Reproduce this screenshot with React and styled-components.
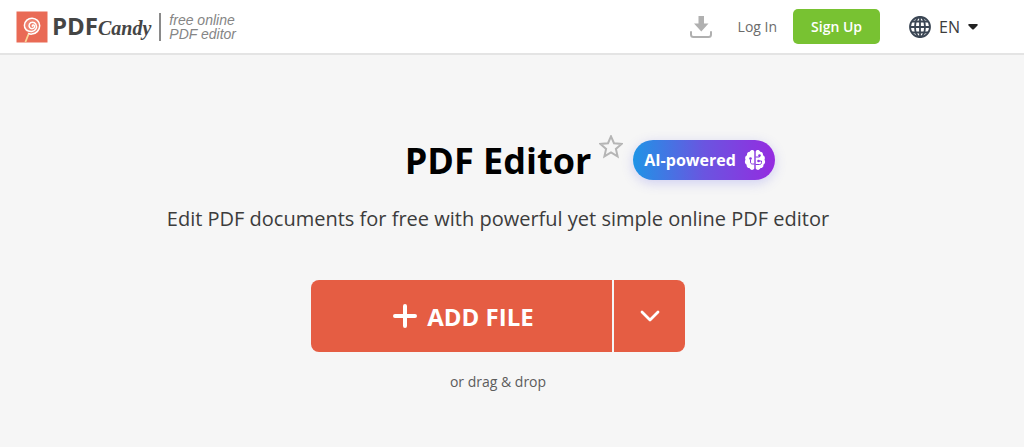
import React from "react"
import styled, { createGlobalStyle } from "styled-components"

const GlobalStyle = createGlobalStyle`
  * {
    box-sizing: border-box;
  }
  body {
    margin: 0;
    background: #f6f6f6;
    font-family: "Open Sans", "Noto Sans", sans-serif;
    color: #3c3c3c;
  }
  svg {
    display: block;
    flex: none;
  }
  button {
    font-family: inherit;
    border: 0;
    padding: 0;
    cursor: pointer;
  }
`

const Header = styled.header`
  display: flex;
  align-items: center;
  justify-content: space-between;
  height: 55px;
  padding: 0 46px 0 16px;
  background: #fff;
  border-bottom: 2px solid #e4e4e4;
`

const Brand = styled.a`
  display: flex;
  align-items: center;
  color: #454545;
  text-decoration: none;
`

const BrandName = styled.span`
  margin-left: 4px;
  font-size: 24px;
  font-weight: 700;
  line-height: 32px;
`

const BrandScript = styled.span`
  font-family: "Liberation Serif", serif;
  font-style: italic;
  font-weight: 700;
  font-size: 20px;
`

const Slogan = styled.span`
  margin-left: 8px;
  padding-left: 8px;
  border-left: 2px solid #8a8a8a;
  font-family: "Liberation Sans", Arial, sans-serif;
  font-style: italic;
  font-size: 14px;
  line-height: 14px;
  color: #858585;
`

const Nav = styled.nav`
  display: flex;
  align-items: center;
`

const IconButton = styled.button`
  background: none;
`

const LogIn = styled.a`
  margin: 0 16px 0 25px;
  font-size: 14px;
  color: #6b6b6b;
  text-decoration: none;
`

const SignUp = styled.button`
  height: 35px;
  padding: 0 18px;
  border-radius: 5px;
  background: #78c232;
  color: #fff;
  font-size: 14px;
  font-weight: 600;
`

const Language = styled.button`
  display: flex;
  align-items: center;
  margin-left: 29px;
  background: none;
  color: #3c3c3c;
  font-size: 16px;
  gap: 8px;
`

const Main = styled.main`
  display: flex;
  flex-direction: column;
  align-items: center;
  padding: 80px 28px 48px 0;
`

const TitleRow = styled.div`
  position: relative;
  display: flex;
`

const Title = styled.h1`
  margin: 0;
  font-size: 36px;
  font-weight: 700;
  line-height: 52px;
  color: #000;
`

/* hangs off the right end of the title so the title stays centred */
const TitleExtras = styled.div`
  position: absolute;
  left: 100%;
  top: 0;
  display: flex;
  align-items: flex-start;
  gap: 10px;
  padding-left: 8px;
`

const Badge = styled.span`
  display: flex;
  align-items: center;
  gap: 8px;
  height: 40px;
  margin-top: 5px;
  padding: 0 9px 0 11px;
  border-radius: 20px;
  background: linear-gradient(90deg, #1f94e6, #6a55e0 50%, #952be0);
  box-shadow: 0 3px 12px rgba(90, 90, 230, 0.25);
  color: #fff;
  font-size: 16px;
  font-weight: 700;
  white-space: nowrap;
`

const Subtitle = styled.p`
  margin: 16px 0 0;
  font-size: 20px;
  line-height: 32px;
`

const Upload = styled.div`
  display: flex;
  gap: 2px;
  width: 374px;
  max-width: 100%;
  height: 72px;
  margin-top: 45px;
  border-radius: 8px;
  overflow: hidden;
`

const UploadButton = styled.button`
  display: flex;
  align-items: center;
  justify-content: center;
  gap: 10px;
  flex: ${props => (props.$narrow ? "0 0 71px" : "1")};
  padding-left: ${props => (props.$narrow ? "0" : "4px")};
  background: #e55d43;
  color: #fff;
  font-size: 24px;
  font-weight: 700;
`

const Hint = styled.p`
  margin: 20px 0 0;
  font-size: 14px;
  line-height: 20px;
  color: #5c5c5c;
`

const Lollipop = () => (
  <svg width="32" height="32" viewBox="0 0 32 32" aria-hidden="true">
    <rect width="31" height="31" y="0.5" x="0.5" fill="#e96a55" />
    <path d="M12.8 22.5 9.4 31" stroke="#f9d596" strokeWidth="1.8" />
    <circle cx="16" cy="15" r="8" fill="#ee8371" />
    <path
      d="M16.400 15.200c-.5-1 .6-1.700 1.500-1 1.300 1 .5 3.200-1.400 3.400-2.700.3-4.100-2.300-3.100-4.400 1.300-2.500 4.900-2.500 6.400 0 1.800 3.300-.3 6.900-3.800 7.200-4.800.4-7.800-2.500-7.600-6.200.3-4.200 3.700-7.100 7.800-7 4 .1 7.300 3.300 7.500 7.300.1 4.500-3.400 8.300-7.900 8.600-1.200.1-2.200-.1-3-.5"
      fill="none"
      stroke="#fff"
      strokeWidth="1.500"
      strokeLinecap="round"
    />
  </svg>
)

const DownloadIcon = () => (
  <svg width="24" height="24" viewBox="0 0 24 24" aria-hidden="true">
    <path d="M9.500 1h5.500v7.500h4.500l-7.200 8-7.300-8h4.500z" fill="#b0b0b0" />
    <path
      d="M2 17v2.500c0 1.700.8 2.500 2.500 2.500h15c1.700 0 2.500-.8 2.500-2.500V17"
      fill="none"
      stroke="#b0b0b0"
      strokeWidth="2"
      strokeLinecap="round"
    />
  </svg>
)

const GlobeIcon = () => (
  <svg width="22" height="22" viewBox="0 0 22 22" aria-hidden="true">
    <g fill="none" stroke="#3b4654" strokeWidth="1.8">
      <circle cx="11" cy="11" r="10" />
      <ellipse cx="11" cy="11" rx="5" ry="10" />
      <path d="M11 1v20M1 11h20M3 5.500h16M3 16.500h16" />
    </g>
  </svg>
)

const StarIcon = () => (
  <svg width="24" height="24" viewBox="0 0 24 24" aria-hidden="true">
    <path
      d="m12 1.300 3 6.900 7.700.7-5.800 5 1.700 7.500-6.600-3.900-6.600 3.900 1.700-7.500-5.800-5 7.700-.7z"
      fill="none"
      stroke="#b5b5b5"
      strokeWidth="2"
    />
  </svg>
)

const BrainIcon = () => (
  <svg width="22" height="22" viewBox="0 0 22 22" aria-hidden="true">
    <path
      d="M10.300 2.500v17c-.7 1.800-4 2-4.800-.4-2 .1-3.200-1.500-2.800-3.300C.8 14.800.4 12.300 1.500 10.700.6 8.800 1.400 6.800 3 6.200c-.2-2 1-3.500 2.800-3.500C6.600.6 9.500.5 10.300 2.500zM11.700 2.500v17c.7 1.800 4 2 4.800-.4 2 .1 3.200-1.500 2.800-3.300 1.900-1 2.300-3.500 1.200-5.100.9-1.900.1-3.900-1.500-4.500.2-2-1-3.500-2.800-3.500-.8-2.100-3.700-2.200-4.500-.2z"
      fill="#fff"
    />
    <g fill="none" stroke="#8739df" strokeWidth="1">
      <path d="M10.500 15H8.500c-1.300 0-2-.7-2-2v-2.500M11.500 8h4V7M11.500 15.500h4c1.300 0 2-.7 2-2V12h-3" />
    </g>
    <g fill="#8739df">
      <circle cx="6.500" cy="9.500" r="1.300" />
      <circle cx="15.500" cy="6.500" r="1.300" />
      <circle cx="14.500" cy="12" r="1.300" />
    </g>
  </svg>
)

const PlusIcon = () => (
  <svg width="24" height="24" viewBox="0 0 24 24" aria-hidden="true">
    <path d="M12 2v20M2 12h20" stroke="#fff" strokeWidth="4" strokeLinecap="round" />
  </svg>
)

const ChevronIcon = () => (
  <svg width="20" height="12" viewBox="0 0 20 12" aria-hidden="true">
    <path
      d="m2 2 8 8 8-8"
      fill="none"
      stroke="#fff"
      strokeWidth="2.800"
      strokeLinecap="round"
      strokeLinejoin="round"
    />
  </svg>
)

const CaretIcon = () => (
  <svg width="10" height="6" viewBox="0 0 10 6" aria-hidden="true">
    <path d="M1.200 0h7.600c1 0 1.300.8.7 1.400L5.800 5.200c-.5.5-1.100.5-1.600 0L.5 1.400C-.1.800.2 0 1.200 0z" fill="#222" />
  </svg>
)

const App = () => (
  <>
    <GlobalStyle />
    <Header>
      <Brand href="#">
        <Lollipop />
        <BrandName>
          PDF<BrandScript>Candy</BrandScript>
        </BrandName>
        <Slogan>
          free online
          <br />
          PDF editor
        </Slogan>
      </Brand>
      <Nav>
        <IconButton aria-label="Download">
          <DownloadIcon />
        </IconButton>
        <LogIn href="#">Log In</LogIn>
        <SignUp>Sign Up</SignUp>
        <Language>
          <GlobeIcon />
          EN
          <CaretIcon />
        </Language>
      </Nav>
    </Header>
    <Main>
      <TitleRow>
        <Title>PDF Editor</Title>
        <TitleExtras>
          <IconButton aria-label="Add to favourites">
            <StarIcon />
          </IconButton>
          <Badge>
            AI-powered
            <BrainIcon />
          </Badge>
        </TitleExtras>
      </TitleRow>
      <Subtitle>Edit PDF documents for free with powerful yet simple online PDF editor</Subtitle>
      <Upload>
        <UploadButton>
          <PlusIcon />
          ADD FILE
        </UploadButton>
        <UploadButton $narrow aria-label="More sources">
          <ChevronIcon />
        </UploadButton>
      </Upload>
      <Hint>or drag &amp; drop</Hint>
    </Main>
  </>
)

export default App
